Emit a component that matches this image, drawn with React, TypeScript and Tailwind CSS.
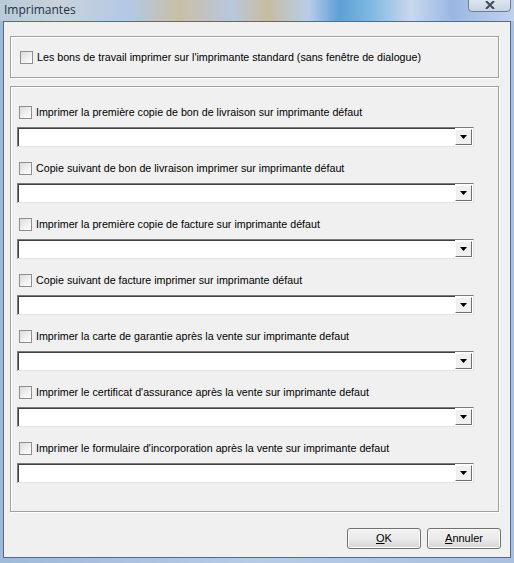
import React from "react";

const rows = [
  "Imprimer la première copie de bon de livraison sur imprimante défaut",
  "Copie suivant de bon de livraison imprimer sur imprimante défaut",
  "Imprimer la première copie de facture sur imprimante défaut",
  "Copie suivant de facture imprimer sur imprimante défaut",
  "Imprimer la carte de garantie après la vente sur imprimante defaut",
  "Imprimer le certificat d'assurance après la vente sur imprimante defaut",
  "Imprimer le formulaire d'incorporation après la vente sur imprimante defaut",
];

const CheckBox = () => (
  <span className="inline-block h-[13px] w-[13px] shrink-0 border border-[#8f8f8f] bg-gradient-to-br from-[#dcdcdc] to-white" />
);

const Combo = () => (
  <div className="flex h-[20px] w-[457px] border border-t-[#7a7a7a] border-l-[#7a7a7a] border-r-[#e3e3e3] border-b-[#e3e3e3] bg-white">
    <div className="flex-1 border-t border-l border-t-[#404040] border-l-[#404040]" />
    <div className="my-[1px] mr-[1px] flex w-[17px] items-center justify-center border border-t-white border-l-white border-r-[#6f6f6f] border-b-[#6f6f6f] bg-[#f0f0f0]">
      <svg width="7" height="4" viewBox="0 0 7 4">
        <path d="M0 0h7L3.5 4z" fill="#000" />
      </svg>
    </div>
  </div>
);

const Button = ({ hot, rest }: { hot: string; rest: string }) => (
  <button className="flex h-[21px] w-[74px] items-center justify-center rounded-[3px] border border-[#707070] bg-gradient-to-b from-[#f2f2f2] via-[#ebebeb] to-[#d6d6d6] text-[11px] text-black shadow-[inset_0_0_0_1px_#fcfcfc]">
    <span>
      <span className="underline">{hot}</span>
      {rest}
    </span>
  </button>
);

export default function App() {
  return (
    <div
      className="flex h-[563px] w-[514px] flex-col overflow-hidden bg-gradient-to-r from-[#9fb9d9] via-[#b6cbe6] to-[#a9c0de]"
      style={{ fontFamily: "'Liberation Sans', Arial, sans-serif" }}
    >
      {/* title bar */}
      <div className="relative flex h-[21px] items-start bg-[linear-gradient(90deg,#b9cbd8_0%,#c7d2dc_12%,#b4c8e4_25%,#c9bfa6_35%,#b8c7de_45%,#c7bda0_52%,#b9cde8_60%,#5e9fd5_66%,#7db8e2_72%,#c9d8ec_80%,#9ab7e4_88%,#c1d2ea_100%)] pl-[4px] pt-[3px]">
        <span
          className="text-[12px] leading-[14px] text-[#1e3246]"
          style={{ fontFamily: "'Open Sans', 'Noto Sans', sans-serif" }}
        >
          Imprimantes
        </span>
        <div className="absolute right-[3px] top-[-5px] flex h-[17px] w-[43px] items-end justify-center rounded-b-[4px] border border-[#6d7d93] bg-gradient-to-b from-[#e6edf5] to-[#c7d4e4] pb-[2px]">
          <svg width="10" height="8" viewBox="0 0 10 8">
            <path d="M1 0l8 8M9 0L1 8" stroke="#3f4a58" strokeWidth="2" />
          </svg>
        </div>
      </div>

      {/* client area */}
      <div className="mx-[3px] mb-[5px] flex flex-1 flex-col border border-[#4f6b8d] bg-[#f0f0f0] px-[6px] pt-[14px]">
        <div className="flex h-[42px] w-[489px] items-center gap-[3px] border border-[#a0a0a0] pl-[9px] shadow-[inset_1px_1px_0_#ffffff,1px_1px_0_#ffffff]">
          <CheckBox />
          <span className="ml-[1px] text-[10.7px] text-black">
            Les bons de travail imprimer sur l'imprimante standard (sans fenêtre de dialogue)
          </span>
        </div>

        <div className="mt-[8px] flex h-[426px] w-[489px] flex-col gap-[15px] border border-[#a0a0a0] pl-[6px] pt-[19px] shadow-[inset_1px_1px_0_#ffffff,1px_1px_0_#ffffff]">
          {rows.map((r) => (
            <div key={r} className="flex flex-col gap-[8px]">
              <div className="flex h-[13px] items-center gap-[3px] pl-[2px]">
                <CheckBox />
                <span className="ml-[1px] text-[10.7px] text-black">{r}</span>
              </div>
              <Combo />
            </div>
          ))}
        </div>

        <div className="mt-[16px] flex justify-end gap-[6px] pr-[3px]">
          <Button hot="O" rest="K" />
          <Button hot="A" rest="nnuler" />
        </div>
      </div>
    </div>
  );
}
